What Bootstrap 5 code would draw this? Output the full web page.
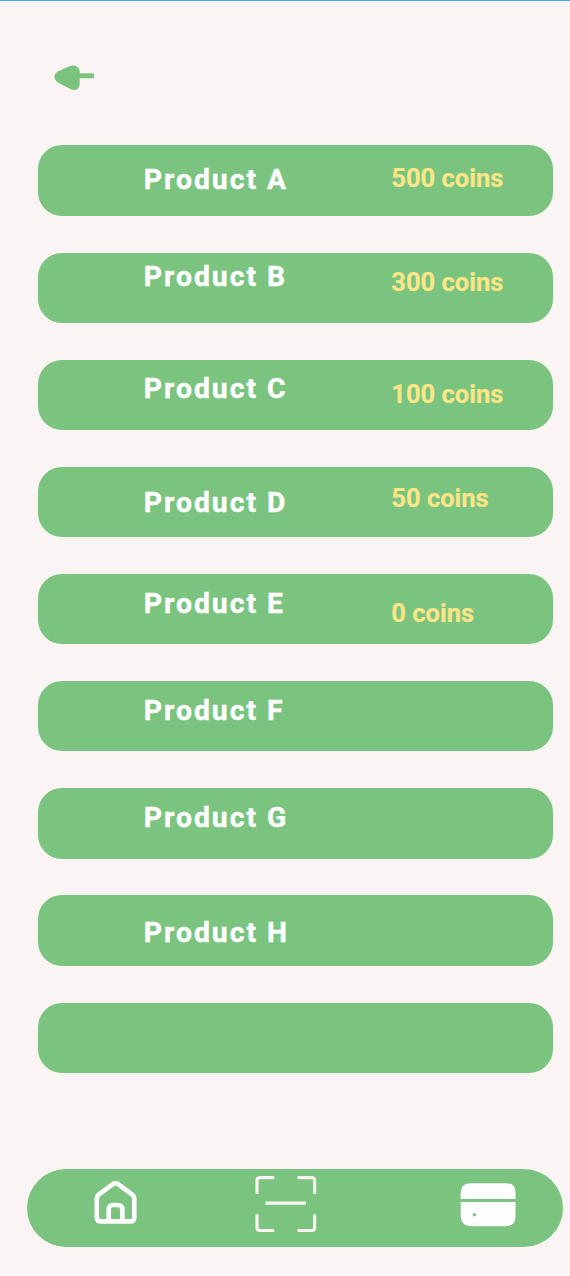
<!DOCTYPE html>
<html lang="en">
<head>
<meta charset="utf-8">
<meta name="viewport" content="width=device-width, initial-scale=1">
<title>Products</title>
<link href="https://cdn.jsdelivr.net/npm/bootstrap@5.3.0/dist/css/bootstrap.min.css" rel="stylesheet">
<style>
:root { --leaf: #7bc47f; --paper: #faf4f4; --coin: #fae588; }
body { background: var(--paper); font-family: Roboto, "Liberation Sans", sans-serif; }
.screen { height: 1276px; border-top: 1px solid #4ba3f5; overflow: hidden; }
.back { height: 144.4px; padding: 64px 0 0 53px; }
.products { gap: 36.85px; margin: 0 17px 0 38px; }
.product { height: 70.3px; border-radius: 24px; background: var(--leaf); padding-left: 105.7px; }
.product-name { width: 247.6px; font-size: 28.3px; line-height: 30px; font-weight: 700; letter-spacing: 2.02px; color: #fff; -webkit-text-stroke: .4px #fff; margin-top: 14.5px; }
.price { font-size: 25.5px; line-height: 1; font-weight: 700; color: var(--coin); -webkit-text-stroke: .2px var(--coin); }
.product:nth-child(1) .product-name { margin-top: 19.3px; }
.product:nth-child(2) .product-name { margin-top: 9.2px; }
.product:nth-child(3) .product-name { margin-top: 14px; }
.product:nth-child(4) .product-name { margin-top: 20.8px; }
.product:nth-child(5) .product-name { margin-top: 15.4px; }
.product:nth-child(8) .product-name { margin-top: 23px; }
.product:nth-child(1) .price { margin-top: 20.2px; }
.product:nth-child(2) .price { margin-top: 17.1px; }
.product:nth-child(3) .price { margin-top: 21.9px; }
.product:nth-child(4) .price { margin-top: 18.7px; }
.product:nth-child(5) .price { margin-top: 26.9px; }
.tabs { height: 78px; margin: 96px 7.5px 0 26.5px; padding: 0 45.5px 0 66.5px; border-radius: 39px; background: var(--leaf); }
.tab-scan { margin-left: 110px; }
</style>
</head>
<body>
<div class="screen d-flex flex-column">
  <header class="back flex-shrink-0">
    <a href="#" class="d-block" aria-label="Back">
      <svg class="d-block" width="42" height="27" viewBox="53 65 42 27">
        <path d="M79 73.2H92.6Q94 73.2 94 74.6V76.7Q94 78.2 92.6 78.2H79Z" fill="#7bc47f"/>
        <path d="M57.8 71.6L69.8 66.1C74.5 64.2 79.6 66.6 79.6 71.6V84C79.6 88.8 75.2 91.6 70.8 89.3L57.9 82.4C53.3 79.8 53.3 73.8 57.8 71.6Z" fill="#7bc47f"/>
      </svg>
    </a>
  </header>
  <main class="products d-flex flex-column">
    <div class="product d-flex align-items-start"><div class="product-name">Product A</div><div class="price">500 coins</div></div>
    <div class="product d-flex align-items-start"><div class="product-name">Product B</div><div class="price">300 coins</div></div>
    <div class="product d-flex align-items-start"><div class="product-name">Product C</div><div class="price">100 coins</div></div>
    <div class="product d-flex align-items-start"><div class="product-name">Product D</div><div class="price">50 coins</div></div>
    <div class="product d-flex align-items-start"><div class="product-name">Product E</div><div class="price">0 coins</div></div>
    <div class="product d-flex align-items-start"><div class="product-name">Product F</div></div>
    <div class="product d-flex align-items-start"><div class="product-name">Product G</div></div>
    <div class="product d-flex align-items-start"><div class="product-name">Product H</div></div>
    <div class="product"></div>
  </main>
  <nav class="tabs d-flex flex-shrink-0">
    <svg width="46" height="78" viewBox="93 1169 46 78" fill="none" stroke="#fff" stroke-width="4.6" stroke-linejoin="round">
      <path d="M96.8 1198.2Q96.8 1196.2 98.4 1194.9L112.5 1184.3Q115.5 1182.1 118.5 1184.3L132.6 1194.9Q134.3 1196.2 134.3 1198.2V1217.4Q134.3 1221.4 130.3 1221.4H100.8Q96.8 1221.4 96.8 1217.4Z"/>
      <path d="M108.7 1221V1209.6Q108.7 1205 113.3 1205H117.8Q122.4 1205 122.4 1209.6V1221"/>
    </svg>
    <svg class="tab-scan" width="70" height="78" viewBox="249 1169 70 78" fill="none" stroke="#faf4f4" stroke-width="3.2" stroke-linecap="round" stroke-linejoin="round">
      <path d="M257 1192.5V1180.6Q257 1177.6 260 1177.6H273M298.8 1177.6H311.6Q314.6 1177.6 314.6 1180.6V1192.5M314.6 1215.5V1227.5Q314.6 1230.5 311.6 1230.5H298.8M273 1230.5H260Q257 1230.5 257 1227.5V1215.5"/>
      <path d="M265.4 1203.2H306" stroke-linecap="butt"/>
    </svg>
    <svg class="ms-auto" width="57" height="78" viewBox="460 1169 57 78" fill="#fff">
      <path d="M460.7 1199V1194C460.7 1186 464 1183.2 472 1183.2H505C513 1183.2 515.5 1186 515.5 1194V1199Z"/>
      <path d="M460.7 1202H515.5V1214C515.5 1223 513 1226.2 504 1226.2H473C464 1226.2 460.7 1223 460.7 1214Z"/>
      <circle cx="474.4" cy="1214.8" r="1.7" fill="#7bc47f"/>
    </svg>
  </nav>
</div>
<script src="https://cdn.jsdelivr.net/npm/bootstrap@5.3.0/dist/js/bootstrap.bundle.min.js"></script>
</body>
</html>
